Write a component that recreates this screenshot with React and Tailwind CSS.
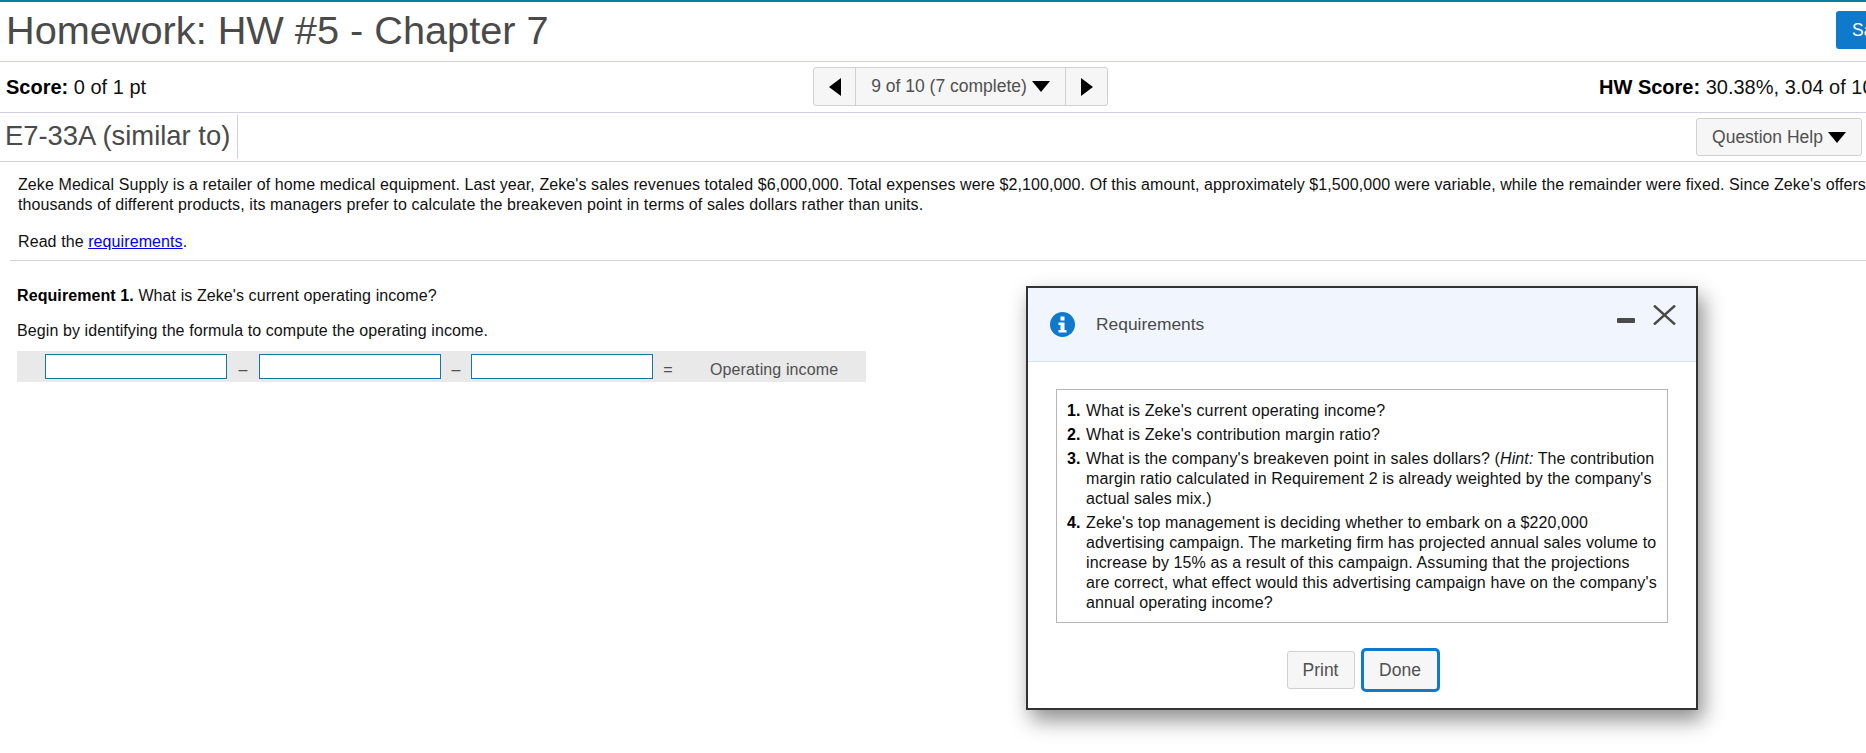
import React from "react";

const DownArrow = () => (
  <svg width="18" height="11" viewBox="0 0 18 11" className="shrink-0">
    <polygon points="0,0 18,0 9,11" fill="#000" />
  </svg>
);

const FormulaInput = () => (
  <div className="w-[182px] h-[25px] bg-white border border-[#13799b] shrink-0"></div>
);

const App = () => {
  return (
    <div className="relative w-[1866px] h-[753px] overflow-hidden bg-white font-['Liberation_Sans',Arial,sans-serif] text-[#111]">
      <div className="h-[2px] bg-[#0a7ea4]"></div>

      {/* Title */}
      <div className="h-[60px] flex items-center justify-between border-b border-[#cfd2de] pl-[6px]">
        <h1 className="text-[39.7px] leading-none text-[#4a4a4a] pb-[2px]">Homework: HW #5 - Chapter 7</h1>
        <button className="w-[90px] h-[38px] -mr-[60px] rounded-[3px] bg-[#0f7acb] text-white text-[17.5px] text-left pl-[16px] mb-[3px]">
          Save
        </button>
      </div>

      {/* Score row */}
      <div className="h-[51px] relative flex items-center justify-between border-b border-[#cfd2de] pl-[6px]">
        <div className="text-[20px] text-[#111]"><b className="text-black">Score:</b> 0 of 1 pt</div>
        <div className="absolute left-[813px] top-[5px] flex h-[39px] w-[295px] rounded-[3px] border border-[#d0d0d0] bg-[#f6f6f6]">
          <div className="w-[42px] flex items-center justify-center border-r border-[#d0d0d0]">
            <svg width="12" height="18" viewBox="0 0 12 18"><polygon points="12,0 12,18 0,9" fill="#000" /></svg>
          </div>
          <div className="w-[210px] flex items-center justify-center gap-[5px] border-r border-[#d0d0d0] text-[17.5px] text-[#505050]">
            9 of 10 (7 complete) <DownArrow />
          </div>
          <div className="flex-1 flex items-center justify-center">
            <svg width="12" height="18" viewBox="0 0 12 18"><polygon points="0,0 0,18 12,9" fill="#000" /></svg>
          </div>
        </div>
        <div className="text-[20px] whitespace-nowrap w-[267px] shrink-0 overflow-hidden"><b className="text-black">HW Score:</b> 30.38%, 3.04 of 10</div>
      </div>

      {/* Question title */}
      <div className="h-[49px] flex items-center justify-between border-b border-[#cfd2de] pl-[5px] pr-[4px]">
        <div className="h-[44px] flex items-center pr-[7px] pb-[2px] border-r border-[#cfd2de] text-[27.4px] text-[#4a4a4a]">E7-33A (similar to)</div>
        <button className="w-[166px] h-[38px] flex items-center justify-center gap-[5px] rounded-[3px] border border-[#d0d0d0] bg-[#f6f6f6] text-[17.5px] text-[#505050]">
          Question Help <DownArrow />
        </button>
      </div>

      {/* Question body */}
      <div className="pl-[18px] pt-[13px] text-[16px] tracking-[0.09px] leading-[20px] whitespace-nowrap">
        <p>
          Zeke Medical Supply is a retailer of home medical equipment. Last year, Zeke's sales revenues totaled $6,000,000. Total expenses were $2,100,000. Of this amount, approximately $1,500,000 were variable, while the remainder were fixed. Since Zeke's offers
          <br />
          thousands of different products, its managers prefer to calculate the breakeven point in terms of sales dollars rather than units.
        </p>
        <p className="mt-[17px]">
          Read the <a className="text-[#0000ee] underline">requirements</a>.
        </p>
      </div>
      <div className="ml-[10px] mt-[8px] h-px bg-[#d2d2da]"></div>

      <div className="pl-[17px] text-[16px] tracking-[0.09px] leading-[20px]">
        <p className="mt-[25px]"><b className="text-black">Requirement 1.</b> What is Zeke's current operating income?</p>
        <p className="mt-[15px]">Begin by identifying the formula to compute the operating income.</p>
        <div className="mt-[10px] w-[849px] h-[31px] bg-[#e9e9e9] flex items-center pl-[28px] text-[#505050]">
          <FormulaInput />
          <span className="w-[32px] text-center pt-[7px]">–</span>
          <FormulaInput />
          <span className="w-[30px] text-center pt-[7px]">–</span>
          <FormulaInput />
          <span className="w-[30px] text-center pt-[7px]">=</span>
          <span className="ml-[27px] pt-[7px] tracking-[0.12px]">Operating income</span>
        </div>
      </div>

      {/* Requirements dialog */}
      <div className="absolute left-[1026px] top-[286px] w-[672px] h-[424px] border-2 border-[#333] bg-white shadow-[5px_10px_20px_rgba(0,0,0,0.45)]">
        <div className="relative h-[74px] flex items-center gap-[21px] pl-[22px] bg-[#f1f6fe] border-b border-[#d5e3f3]">
          <svg width="25" height="25" viewBox="0 0 25 25" className="shrink-0">
            <circle cx="12.5" cy="12.5" r="12.5" fill="#0f7acb" />
            <rect x="10.5" y="4.5" width="4" height="4" fill="#fff" />
            <path d="M8.5 10.5h6v7.5h2v2.5h-8V18h2v-5h-2z" fill="#fff" />
          </svg>
          <span className="text-[17.4px] text-[#4a4a4a]">Requirements</span>
          <div className="absolute left-[589px] top-[30px] w-[18px] h-[5px] bg-[#4a4a4a] rounded-[1px]"></div>
          <svg width="23" height="20" viewBox="0 0 23 20" className="absolute left-[625px] top-[17px]">
            <path d="M1 0.5L22 19.5M22 0.5L1 19.5" stroke="#4a4a4a" strokeWidth="2.4" fill="none" />
          </svg>
        </div>

        <div className="mx-[28px] mt-[27px] h-[234px] border border-[#b5b5b5] pl-[10px] pt-[11px] text-[16px] tracking-[0.11px] leading-[20px]">
          <div className="flex"><b className="w-[19px] text-black shrink-0">1.</b><span>What is Zeke's current operating income?</span></div>
          <div className="flex mt-[4px]"><b className="w-[19px] text-black shrink-0">2.</b><span>What is Zeke's contribution margin ratio?</span></div>
          <div className="flex mt-[4px]">
            <b className="w-[19px] text-black shrink-0">3.</b>
            <span>What is the company's breakeven point in sales dollars? (<i>Hint:</i> The contribution<br />margin ratio calculated in Requirement 2 is already weighted by the company's<br />actual sales mix.)</span>
          </div>
          <div className="flex mt-[4px]">
            <b className="w-[19px] text-black shrink-0">4.</b>
            <span>Zeke's top management is deciding whether to embark on a $220,000<br />advertising campaign. The marketing firm has projected annual sales volume to<br />increase by 15% as a result of this campaign. Assuming that the projections<br />are correct, what effect would this advertising campaign have on the company's<br />annual operating income?</span>
          </div>
        </div>

        <div className="flex justify-center items-center gap-[6px] mt-[25px] pl-[2px] text-[17.5px] text-[#505050]">
          <button className="w-[68px] h-[38px] rounded-[3px] border border-[#d0d0d0] bg-[#f6f6f6]">Print</button>
          <button className="w-[79px] h-[44px] rounded-[5px] border-[3px] border-[#0f7acb] bg-[#f6f6f6]">Done</button>
        </div>
      </div>
    </div>
  );
};

export default App;
